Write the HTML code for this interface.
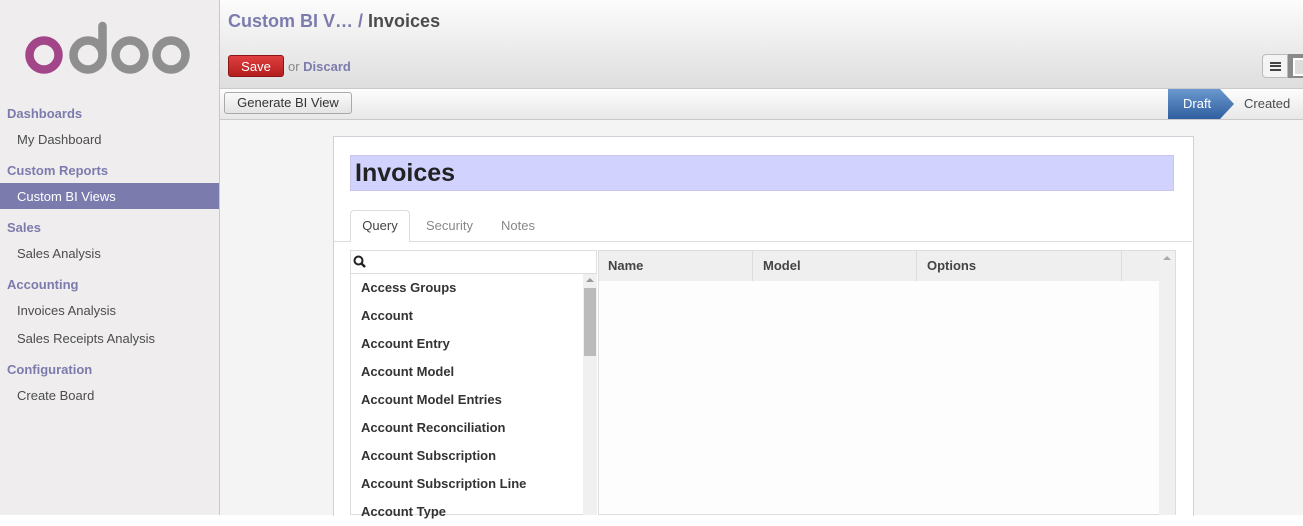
<!DOCTYPE html><html><head><style>
body{margin:0;width:1303px;height:515px;overflow:hidden;font-family:"Liberation Sans",sans-serif;font-size:13px;color:#4c4c4c;position:relative;background:#fff}
.a{position:absolute}
.side{left:0;top:0;width:219px;height:515px;background:#efeded;border-right:1px solid #c8c8c8}
.sec{position:absolute;left:7px;color:#7c7bad;font-weight:bold;font-size:13px}
.it{position:absolute;left:17px;color:#4c4c4c;font-size:13px}
.list div{height:28px;line-height:28px;padding-left:10px;font-weight:bold;color:#333}
</style></head><body>
<div class="a side">
<svg class="a" style="left:0;top:0" width="219" height="90" viewBox="0 0 219 90">
<circle cx="44" cy="55" r="14.5" fill="none" stroke="#a24689" stroke-width="8.5"/>
<circle cx="88" cy="55" r="14.5" fill="none" stroke="#8f8f8f" stroke-width="8.5"/>
<line x1="102.5" y1="26" x2="102.5" y2="55" stroke="#8f8f8f" stroke-width="8.5" stroke-linecap="round"/>
<circle cx="130" cy="55" r="14.5" fill="none" stroke="#8f8f8f" stroke-width="8.5"/>
<circle cx="171" cy="55" r="14.5" fill="none" stroke="#8f8f8f" stroke-width="8.5"/>
</svg>
<div class="sec" style="top:106px">Dashboards</div>
<div class="it" style="top:132px">My Dashboard</div>
<div class="sec" style="top:163px">Custom Reports</div>
<div class="a" style="left:0;top:183px;width:219px;height:26px;background:#7c7bad"></div>
<div class="it" style="top:189px;color:#fff">Custom BI Views</div>
<div class="sec" style="top:220px">Sales</div>
<div class="it" style="top:246px">Sales Analysis</div>
<div class="sec" style="top:277px">Accounting</div>
<div class="it" style="top:303px">Invoices Analysis</div>
<div class="it" style="top:331px">Sales Receipts Analysis</div>
<div class="sec" style="top:362px">Configuration</div>
<div class="it" style="top:388px">Create Board</div>
</div>
<div class="a" style="left:220px;top:0;width:1083px;height:88px;background:linear-gradient(#fcfcfc,#dedede);border-bottom:1px solid #cacaca"></div>
<div class="a" style="left:228px;top:11px;font-size:18px;font-weight:bold;color:#7c7bad">Custom BI V… <span style="color:#7c7bad">/</span> <span style="color:#4c4c4c">Invoices</span></div>
<div class="a" style="left:228px;top:55px;width:56px;height:22px;background:linear-gradient(#df3f3f,#b41e1e);border:1px solid #8b1515;border-radius:3px;color:#fff;text-align:center;line-height:22px;box-sizing:border-box">Save</div>
<div class="a" style="left:288px;top:59px;color:#888">or <b style="color:#7c7bad">Discard</b></div>
<div class="a" style="left:1262px;top:54px;width:26px;height:24px;border:1px solid #bbb;border-radius:4px 0 0 4px;background:#f4f4f4;box-sizing:border-box"><div class="a" style="left:7px;top:7px;width:11px;height:9px;border-top:2px solid #444;border-bottom:2px solid #444;box-sizing:border-box"></div><div class="a" style="left:7px;top:10px;width:11px;height:2px;background:#444"></div></div>
<div class="a" style="left:1288px;top:54px;width:15px;height:24px;background:#8a8a8a"><div class="a" style="left:5px;top:4px;width:12px;height:14px;border:2px solid #fff;background:#ddd"></div></div>
<div class="a" style="left:220px;top:89px;width:1083px;height:30px;background:linear-gradient(#fdfdfd,#e8e8e8);border-bottom:1px solid #cacaca"></div>
<div class="a" style="left:224px;top:92px;width:128px;height:22px;border:1px solid #aaa;border-radius:3px;background:linear-gradient(#fafafa,#e4e4e4);box-sizing:border-box;text-align:center;line-height:20px;color:#333">Generate BI View</div>
<svg class="a" style="left:1168px;top:89px" width="70" height="30"><defs><linearGradient id="g" x1="0" y1="0" x2="0" y2="1"><stop offset="0" stop-color="#6a98cf"/><stop offset="1" stop-color="#2f5fa0"/></linearGradient></defs><polygon points="0,0 52,0 66,15 52,30 0,30" fill="url(#g)"/></svg>
<div class="a" style="left:1183px;top:96px;color:#fff">Draft</div>
<div class="a" style="left:1244px;top:96px;color:#4c4c4c">Created</div>
<div class="a" style="left:220px;top:120px;width:1083px;height:395px;background:#f4f4f4"></div>
<div class="a" style="left:333px;top:136px;width:859px;height:379px;background:#fff;border:1px solid #d0d0d8;border-bottom:none"></div>
<div class="a" style="left:350px;top:155px;width:824px;height:36px;background:#d2d2ff;border:1px solid #c6c6ee;box-sizing:border-box;font-size:25px;font-weight:bold;color:#222;padding-left:4px;line-height:34px">Invoices</div>
<div class="a" style="left:334px;top:241px;width:858px;height:1px;background:#ddd"></div>
<div class="a" style="left:350px;top:210px;width:60px;height:32px;background:#fff;border:1px solid #ddd;border-bottom:none;border-radius:4px 4px 0 0;box-sizing:border-box;text-align:center;line-height:30px;color:#444">Query</div>
<div class="a" style="left:426px;top:218px;color:#888">Security</div>
<div class="a" style="left:501px;top:218px;color:#888">Notes</div>
<div class="a" style="left:350px;top:250px;width:247px;height:265px;border:1px solid #ddd;box-sizing:border-box"></div>
<div class="a" style="left:351px;top:273px;width:246px;height:1px;background:#ddd"></div>
<svg class="a" style="left:353px;top:255px" width="14" height="14"><circle cx="5.5" cy="5.5" r="4" fill="none" stroke="#222" stroke-width="2"/><line x1="8.5" y1="8.5" x2="12" y2="12" stroke="#222" stroke-width="2.5"/></svg>
<div class="a list" style="left:351px;top:274px;width:232px">
<div>Access Groups</div><div>Account</div><div>Account Entry</div><div>Account Model</div><div>Account Model Entries</div><div>Account Reconciliation</div><div>Account Subscription</div><div>Account Subscription Line</div><div>Account Type</div></div>
<div class="a" style="left:583px;top:274px;width:14px;height:241px;background:#f0f0f0"></div>
<div class="a" style="left:584px;top:288px;width:12px;height:68px;background:#bbb"></div>
<div class="a" style="left:586px;top:278px;width:0;height:0;border:4px solid transparent;border-bottom-color:#999;border-top:none"></div>
<div class="a" style="left:598px;top:250px;width:578px;height:265px;border:1px solid #ddd;box-sizing:border-box;background:#fdfdfd"></div>
<div class="a" style="left:599px;top:251px;width:560px;height:30px;background:#efefef"></div>
<div class="a" style="left:752px;top:251px;width:1px;height:30px;background:#ddd"></div>
<div class="a" style="left:916px;top:251px;width:1px;height:30px;background:#ddd"></div>
<div class="a" style="left:1121px;top:251px;width:1px;height:30px;background:#ddd"></div>
<div class="a" style="left:608px;top:258px;font-weight:bold;color:#444">Name</div>
<div class="a" style="left:763px;top:258px;font-weight:bold;color:#444">Model</div>
<div class="a" style="left:927px;top:258px;font-weight:bold;color:#444">Options</div>
<div class="a" style="left:1159px;top:251px;width:16px;height:264px;background:#f0f0f0"></div>
<div class="a" style="left:1163px;top:256px;width:0;height:0;border:4px solid transparent;border-bottom-color:#aaa;border-top:none"></div>
</body></html>
